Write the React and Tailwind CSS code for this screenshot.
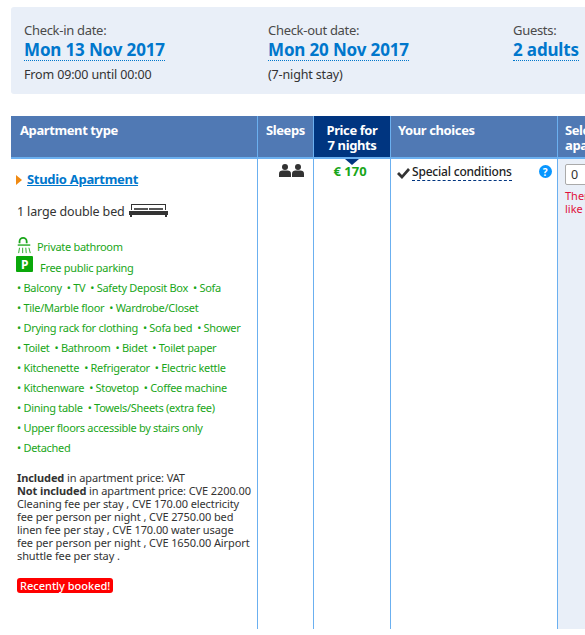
import React from "react";

const font = { fontFamily: '"Noto Sans", sans-serif' };

const facilities = [
  ["Balcony", "TV", "Safety Deposit Box", "Sofa"],
  ["Tile/Marble floor", "Wardrobe/Closet"],
  ["Drying rack for clothing", "Sofa bed", "Shower"],
  ["Toilet", "Bathroom", "Bidet", "Toilet paper"],
  ["Kitchenette", "Refrigerator", "Electric kettle"],
  ["Kitchenware", "Stovetop", "Coffee machine"],
  ["Dining table", "Towels/Sheets (extra fee)"],
  ["Upper floors accessible by stairs only"],
  ["Detached"],
];

const Person = ({ x }) => (
  <g transform={`translate(${x} 0)`}>
    <circle cx="6" cy="3" r="3" />
    <path d="M0 13V9.5C0 7.5 1.5 6.5 3.5 6.5H8.5C10.5 6.5 12 7.5 12 9.5V13Z" />
  </g>
);

const SummaryCol = ({ label, value, note, className }) => (
  <div className={className}>
    <div className="text-[13px] leading-[16px] tracking-[-0.3px] text-[#4a4a4a]">{label}</div>
    <div className="inline-block border-b border-dotted border-[#0077cc] text-[17px] leading-[20px] font-bold tracking-[-0.15px] text-[#0077cc]">
      {value}
    </div>
    {note && <div className="mt-[4px] text-[12.5px] leading-[17px] tracking-[-0.15px] text-[#333333]">{note}</div>}
  </div>
);

const HeadCell = ({ children, className = "bg-[#5079b4]" }) => (
  <div className={`h-[43px] border-r border-b-2 border-[#6bb0f0] pt-[7px] text-[13px] leading-[15px] font-bold tracking-[-0.4px] text-white ${className}`}>
    {children}
  </div>
);

export default function App() {
  return (
    <div className="h-[635px] w-[585px] overflow-hidden bg-white pt-[7px] pl-[11px]" style={font}>
      <div className="flex h-[87px] w-[640px] rounded-[3px] bg-[#e9eff8] pt-[15px] pl-[13px]">
        <SummaryCol className="w-[244px]" label="Check-in date:" value="Mon 13 Nov 2017" note="From 09:00 until 00:00" />
        <SummaryCol className="w-[245px]" label="Check-out date:" value="Mon 20 Nov 2017" note="(7-night stay)" />
        <SummaryCol label="Guests:" value="2 adults" />
      </div>

      <div className="mt-[22px] grid w-[640px] grid-cols-[247px_56px_77px_167px_93px]">
        <HeadCell className="bg-[#5079b4] pl-[9px]">Apartment type</HeadCell>
        <HeadCell className="bg-[#5079b4] pl-2">Sleeps</HeadCell>
        <HeadCell className="relative bg-[#003580] text-center">
          Price for
          <br />7 nights
          <div className="absolute -bottom-[8px] left-[31px] h-0 w-0 border-x-[7px] border-t-[6px] border-x-transparent border-t-[#003580]" />
        </HeadCell>
        <HeadCell className="bg-[#5079b4] pl-[7px]">Your choices</HeadCell>
        <HeadCell className="border-r-0 bg-[#5079b4] pl-[7px]">
          Select
          <br />
          apartment
        </HeadCell>

        <div className="h-[470px] border-r border-[#6bb0f0] pt-[12px] pl-[5px]">
          <div className="flex items-center gap-[5px]">
            <div className="h-0 w-0 border-y-[5px] border-l-[6px] border-y-transparent border-l-[#f08a12]" />
            <span className="text-[13px] leading-[17px] font-bold tracking-[-0.3px] text-[#0077cc] underline">Studio Apartment</span>
          </div>
          <div className="mt-[15px] flex items-center gap-1 pl-[1px] text-[12.5px] leading-[17px] tracking-[-0.15px] text-[#333333]">
            1 large double bed
            <svg className="-mt-[3px]" width="39" height="15" viewBox="0 0 39 15" fill="#333333">
              <path d="M2 1H37V7H36V2H3V7H2Z" />
              <path d="M5 5H19V7H5ZM20 5H34V7H20Z" fill="#555555" />
              <path d="M0 8H39V12H0Z" />
              <path d="M1 12H3V14H1ZM36 12H38V14H36Z" />
            </svg>
          </div>
          <div className="mt-[13px] flex h-[21px] items-end gap-[5px] text-[11px] leading-[15px] tracking-[-0.3px] text-[#19a619]">
            <svg width="16" height="17" viewBox="0 0 16 19" fill="none" stroke="#19a619">
              <path d="M3 7V5A4 4 0 0 1 11 5V7" strokeWidth="2" />
              <path d="M1 9H15" strokeWidth="1.5" />
              <path d="M3 12L2 18M6.5 12V18M10 12L10.5 18M13.5 12L15 18" strokeWidth="1" />
            </svg>
            Private bathroom
          </div>
          <div className="mt-[3px] flex h-[21px] items-center gap-[7px] text-[11px] leading-[15px] tracking-[-0.3px] text-[#19a619]">
            <span className="-mt-[7px] flex h-[16px] w-[17px] items-center justify-center rounded-[1px] bg-[#0aa80a] text-[12px] font-bold text-white">P</span>
            Free public parking
          </div>
          <div>
            {facilities.map((row, i) => (
              <div key={i} className="flex h-[20px] items-center gap-[5px] pl-[1px] text-[11px] tracking-[-0.3px] whitespace-nowrap text-[#19a619]">
                {row.map((item) => (
                  <span key={item}>• {item}</span>
                ))}
              </div>
            ))}
          </div>
          <div className="mt-[13px] w-[240px] pl-[1px] text-[11px] leading-[13px] tracking-[-0.1px] whitespace-nowrap text-[#333333]">
            <b>Included</b> in apartment price: VAT
            <br />
            <b>Not included</b> in apartment price: CVE 2200.00
            <br />
            Cleaning fee per stay , CVE 170.00 electricity
            <br />
            fee per person per night , CVE 2750.00 bed
            <br />
            linen fee per stay , CVE 170.00 water usage
            <br />
            fee per person per night , CVE 1650.00 Airport
            <br />
            shuttle fee per stay .
          </div>
          <div className="mt-[16px] ml-[1px] inline-block rounded-[3px] bg-[#ff0000] px-[3px] text-[11px] leading-[15px] font-medium text-white">
            Recently booked!
          </div>
        </div>

        <div className="border-r border-[#6bb0f0] pt-[5px] pl-[21px]">
          <svg width="25" height="14" viewBox="0 0 25 14" fill="#333333">
            <Person x="0" />
            <Person x="13" />
          </svg>
        </div>

        <div className="border-r border-[#6bb0f0] pt-[3px] pr-[4px] text-center text-[13px] leading-[18px] font-bold text-[#19a619]">€ 170</div>

        <div className="border-r border-[#6bb0f0] pt-[4px] pl-[6px]">
          <div className="flex items-start">
            <svg className="mt-[5px] shrink-0" width="13" height="11" viewBox="0 0 13 11" fill="#333333">
              <path d="M0 6L2 4L5 7L11 0L13 2L5 11Z" />
            </svg>
            <span className="ml-[2px] border-b border-dashed border-[#003580] text-[12px] leading-[17px] font-medium tracking-[-0.2px] whitespace-nowrap text-[#222222]">Special conditions</span>
            <span className="mt-[2px] ml-[27px] flex h-[13px] w-[13px] shrink-0 items-center justify-center rounded-full bg-[#0896ff] text-[10px] leading-none font-bold text-white">?</span>
          </div>
        </div>

        <div className="bg-[#e9eff8] pt-[5px] pl-[7px]">
          <div className="h-[21px] w-[40px] rounded-[2px] border border-[#aaaaaa] bg-white pl-[5px] text-[12.5px] leading-[19px] text-[#333333]">0</div>
          <div className="mt-[4px] text-[11px] leading-[13px] text-[#e0103a]">
            There
            <br />
            like
          </div>
        </div>
      </div>
    </div>
  );
}
